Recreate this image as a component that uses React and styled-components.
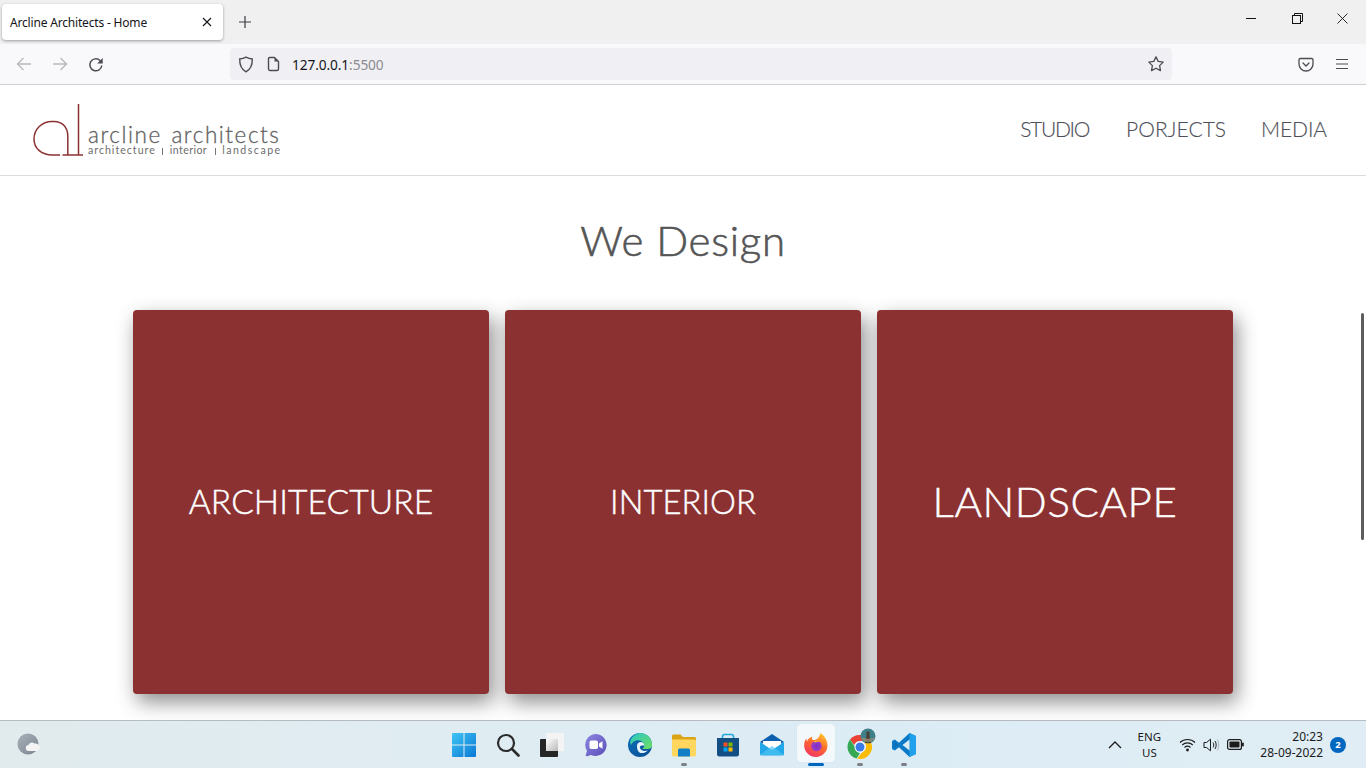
import React from "react";
import styled, { createGlobalStyle } from "styled-components";

const Global = createGlobalStyle`
  html, body { margin: 0; padding: 0; height: 100%; overflow: hidden; background: #fff; }
  * { box-sizing: border-box; }
`;

const Screen = styled.div`
  width: 1366px; height: 768px; display: flex; flex-direction: column; overflow: hidden; position: relative;
  font-family: "Open Sans", "Noto Sans", sans-serif;
`;

/* ---------- browser chrome ---------- */
const TabStrip = styled.div`
  height: 44px; background: #f0f0f1; display: flex; align-items: flex-start; padding: 4px 0 0 2px; flex: none;
`;
const Tab = styled.div`
  width: 221px; height: 36px; background: #fff; border-radius: 4px; box-shadow: 0 1px 3px rgba(0,0,0,.35);
  display: flex; align-items: center; justify-content: space-between; padding: 0 11px 0 8px;
  font-size: 12px; color: #15141a; font-family: "Noto Sans", sans-serif; letter-spacing: -.18px;
`;
const NewTab = styled.div`
  width: 44px; height: 36px; display: flex; align-items: center; justify-content: center;
`;
const Spacer = styled.div`flex: 1;`;
const WinButtons = styled.div`
  display: flex; height: 36px; margin-top: -4px; align-items: center;
`;
const WinBtn = styled.div`
  width: 46px; height: 44px; display: flex; align-items: center; justify-content: center;
`;
const Toolbar = styled.div`
  height: 41px; background: #f9f9fb; border-bottom: 1px solid #cfcfd2; flex: none; display: flex; align-items: center;
  padding: 0 0 0 6px;
`;
const NavBtn = styled.div`
  width: 36px; height: 32px; display: flex; align-items: center; justify-content: center;
`;
const UrlBar = styled.div`
  width: 942px; height: 32px; margin-left: 116px; background: #f0f0f4; border-radius: 4px; display: flex; align-items: center;
  padding: 0 5px 0 5px;
`;
const UrlIcon = styled.div`
  width: 22px; height: 20px; display: flex; align-items: center; justify-content: center; margin-right: ${p => p.$mr || 0}px;
`;
const UrlText = styled.div`
  font-size: 13.7px; color: #15141a; font-family: "Noto Sans", sans-serif; flex: 1; letter-spacing: -.1px;
  span { color: #8a8a91; }
`;
const RightTools = styled.div`
  display: flex; margin-left: 116px;
`;

/* ---------- site ---------- */
const Page = styled.div`
  flex: 1; min-height: 0; background: #fff; overflow: hidden; position: relative;
`;
const SiteHeader = styled.header`
  height: 91px; border-bottom: 1px solid #dcdcdc; display: flex; align-items: center; justify-content: space-between;
  padding: 0 39px 0 33px;
`;
const Logo = styled.div`
  display: flex; align-items: flex-end; height: 54px;
`;
const LogoText = styled.div`
  margin-left: 3px; margin-bottom: 1px; color: #626262; font-family: "Lato", sans-serif; display: flex; flex-direction: column;
`;
const LogoName = styled.div`
  font-size: 22.5px; line-height: 18px; height: 18px; letter-spacing: 1.55px; font-weight: 300; white-space: nowrap; word-spacing: 2px;
  -webkit-text-stroke: .3px #626262; position: relative; top: -1px;
`;
const LogoTag = styled.div`
  font-size: 10.6px; line-height: 11px; height: 11px; white-space: nowrap; display: flex; color: #6d6d6d;
`;
const TagWord = styled.span`
  letter-spacing: ${p => p.$ls}px;
`;
const TagSep = styled.span`
  width: 1px; height: 7px; background: #777; align-self: flex-end; margin: 0 ${p => p.$r}px 1px ${p => p.$l}px;
`;
const Nav = styled.nav`
  display: flex;
`;
const NavLink = styled.a`
  font-family: "Lato", sans-serif; font-weight: 300; font-size: 21px; color: #4f4f59; line-height: 28px; position: relative; top: -1px;
  letter-spacing: ${p => p.$ls}px; margin-left: ${p => p.$ml}px; -webkit-text-stroke: .15px #4f4f59;
`;
const Title = styled.h1`
  margin: 0; padding-top: 37px; height: 134px; text-align: center; font-family: "Lato", sans-serif; font-weight: 300;
  font-size: 42px; line-height: 54px; color: #555; letter-spacing: .7px; -webkit-text-stroke: .6px #555;
`;
const Cards = styled.div`
  display: grid; grid-template-columns: repeat(3, 356px); gap: 16px; justify-content: center;
`;
const Card = styled.div`
  height: 384px; background: #8c3132; border-radius: 4px; box-shadow: 4px 8px 20px rgba(0,0,0,.45);
  display: flex; align-items: center; justify-content: center; padding-bottom: 2px; color: #fff; font-family: "Lato", sans-serif; font-weight: 300;
  font-size: ${p => p.$size}px; letter-spacing: ${p => p.$ls}px; -webkit-text-stroke: .45px #fff;
`;
const ScrollThumb = styled.div`
  position: absolute; right: 2px; top: 228px; width: 3px; height: 227px; background: #5d5d5d; border-radius: 2px;
`;

/* ---------- taskbar ---------- */
const Taskbar = styled.div`
  height: 48px; flex: none; border-top: 1px solid #b6bcc0; display: grid; grid-template-columns: 1fr auto 1fr; align-items: center;
  background: linear-gradient(90deg, #e1ebee 0%, #dfecf2 35%, #dcecf5 65%, #e0edf4 100%);
`;
const TaskLeft = styled.div`
  padding-left: 17px; display: flex; align-items: center; padding-bottom: 1px;
`;
const TaskCenter = styled.div`
  display: flex; align-items: center; margin-left: 1px;
`;
const TaskIcon = styled.div`
  width: 44px; height: 44px; display: flex; align-items: center; justify-content: center; position: relative;
  > svg { position: relative; z-index: 1; }
  &::before {
    content: ""; display: ${p => p.$active ? "block" : "none"}; position: absolute; left: 3px; top: 1px; width: 38px; height: 38px;
    border-radius: 4px; background: rgba(255,255,255,.65); box-shadow: 0 0 1px rgba(0,0,0,.15);
  }
  &::after {
    content: ""; display: ${p => p.$dot || p.$active ? "block" : "none"}; position: absolute; bottom: 1px; left: 50%; transform: translateX(-50%);
    width: ${p => p.$active ? 16 : 6}px; height: 3px; border-radius: 2px; background: ${p => p.$active ? "#0067c0" : "#7b8085"};
  }
`;
const Tray = styled.div`
  display: flex; align-items: center; justify-content: flex-end; color: #1b1b1b; font-size: 12px; font-family: "Noto Sans", sans-serif;
`;
const Lang = styled.div`
  width: 30px; text-align: center; line-height: 16px; margin: 0 15px 0 12px; font-size: 11.5px;
`;
const TrayIcons = styled.div`
  display: flex; align-items: center; gap: 7px; margin-right: 16px;
`;
const Clock = styled.div`
  text-align: right; line-height: 16px; margin-right: 7px;
`;
const Badge = styled.div`
  width: 16px; height: 16px; border-radius: 50%; background: #0067c0; color: #fff; font-size: 9.5px; font-weight: 700;
  display: flex; align-items: center; justify-content: center; margin-right: 20px;
`;

const Stroke = { fill: "none", stroke: "currentColor" };

const Shield = () => (
  <svg width="16" height="17" viewBox="0 0 16 17" style={{ color: "#4c4c52" }}><path {...Stroke} strokeWidth="1.4" d="M8 1.2c2 1.2 4 1.7 6.3 1.8.1 5.8-1.6 10.3-6.3 12.8C3.300 13.300 1.600 8.800 1.700 3 4 2.900 6 2.400 8 1.200z"/></svg>
);
const PageIcon = () => (
  <svg width="14" height="16" viewBox="0 0 14 16" style={{ color: "#4c4c52" }}><path {...Stroke} strokeWidth="1.4" strokeLinejoin="round" d="M2.500 1.500h5l4 4v7.500a1.500 1.500 0 0 1-1.500 1.500H3a1.500 1.500 0 0 1-1.500-1.500V2.500a1 1 0 0 1 1-1z"/><path fill="#4c4c52" d="M7.500 1.500l4 4h-4z"/></svg>
);
const Arrow = ({ flip }) => (
  <svg width="16" height="14" viewBox="0 0 16 14" style={{ color: "#b9b9bd", transform: flip ? "scaleX(-1)" : "none" }}><path {...Stroke} strokeWidth="1.3" d="M15 7H1.500M7.500 1 1.500 7l6 6"/></svg>
);
const Reload = () => (
  <svg width="16" height="18" viewBox="0 0 16 18" style={{ color: "#4c4c52" }}><g transform="translate(0 2)"><path {...Stroke} strokeWidth="1.5" d="M13.800 8.500A6 6 0 1 1 12 3.500L14 5.500"/><path fill="#4c4c52" d="M14.700 1v5.500H9.200z"/></g></svg>
);
const Star = () => (
  <svg width="18" height="18" viewBox="0 0 18 18" style={{ color: "#4c4c52" }}><path {...Stroke} strokeWidth="1.300" strokeLinejoin="round" d="M9 1.800l2.200 4.600 5 .7-3.600 3.500.9 5L9 13.200l-4.500 2.400.9-5L1.800 7.100l5-.7z"/></svg>
);
const Pocket = () => (
  <svg width="16" height="15" viewBox="0 0 16 15" style={{ color: "#4c4c52" }}><path {...Stroke} strokeWidth="1.300" d="M2.200 1.500h11.600a1.200 1.200 0 0 1 1.200 1.200V7a7 7 0 0 1-14 0V2.700a1.200 1.200 0 0 1 1.200-1.200z"/><path {...Stroke} strokeWidth="1.300" strokeLinecap="round" d="M5 6l3 3 3-3"/></svg>
);
const Menu = () => (
  <svg width="14" height="12" viewBox="0 0 14 12" style={{ color: "#4c4c52" }}><path {...Stroke} strokeWidth="1.200" d="M1 1.500h12M1 6h12M1 10.500h12"/></svg>
);

const LogoMark = () => (
  <svg width="52" height="54" viewBox="0 0 52 54">
    <path fill="none" stroke="#8c3132" strokeWidth="1.500" d="M27 52H19.500C8 52 1 45 1 36 1 26 9 18.500 19 18.500H21C30 18.500 34.800 25 34.800 33V52" />
    <path fill="none" stroke="#8c3132" strokeWidth="1.500" d="M45.500 1V52M29.500 52H50" />
  </svg>
);

const WinLogo = () => (
  <svg width="24" height="24" viewBox="0 0 24 24">
    <defs><linearGradient id="wl" x1="0" y1="0" x2="1" y2="1"><stop offset="0" stopColor="#3ec4f5"/><stop offset="1" stopColor="#0a78d4"/></linearGradient></defs>
    <path fill="url(#wl)" d="M0 1a1 1 0 0 1 1-1h10.500v11.500H0zM12.500 0H23a1 1 0 0 1 1 1v10.500H12.500zM0 12.500h11.500V24H1a1 1 0 0 1-1-1zM12.500 12.500H24V23a1 1 0 0 1-1 1H12.500z"/>
  </svg>
);
const SearchIcon = () => (
  <svg width="24" height="24" viewBox="0 0 24 24"><circle cx="10" cy="10" r="8" fill="none" stroke="#2a2a2a" strokeWidth="2.200"/><path stroke="#2a2a2a" strokeWidth="2.600" strokeLinecap="round" d="M16 16l6.500 6.500"/></svg>
);
const TaskView = () => (
  <svg width="24" height="24" viewBox="0 0 24 24">
    <defs><linearGradient id="tv" x1="0" y1="0" x2="1" y2="1"><stop offset="0" stopColor="#ffffff"/><stop offset="1" stopColor="#b8b8b8"/></linearGradient></defs>
    <rect x="0" y="6" width="18" height="18" rx="1" fill="#262626"/>
    <rect x="6" y="0" width="18" height="18" rx="1" fill="#f4f4f4"/>
    <rect x="6" y="6" width="12" height="12" fill="url(#tv)"/>
  </svg>
);
const Chat = () => (
  <svg width="24" height="24" viewBox="0 0 24 24">
    <defs><linearGradient id="ch" x1="0" y1="0" x2="1" y2="1"><stop offset="0" stopColor="#8d86e0"/><stop offset="1" stopColor="#5a4fb8"/></linearGradient></defs>
    <path fill="url(#ch)" d="M11.500 1a11 11 0 1 1-4.500 21l-3.600 1.300c-1 .3-1.900-.6-1.600-1.500L3 18A11 11 0 0 1 11.500 1z"/>
    <rect x="5.500" y="7.500" width="8.500" height="8.500" rx="1.800" fill="#fff"/><path fill="#fff" d="M15 10.500l3.500-2.200v7.400L15 13.500z"/>
  </svg>
);
const Edge = () => (
  <svg width="24" height="24" viewBox="0 0 24 24">
    <defs>
      <linearGradient id="e1" x1="0" y1="0" x2="1" y2="1"><stop offset="0" stopColor="#0b6fb8"/><stop offset="1" stopColor="#0a4e94"/></linearGradient>
      <linearGradient id="e2" x1="0" y1="0" x2="1" y2="1"><stop offset="0" stopColor="#2bc5c8"/><stop offset="1" stopColor="#6ee05f"/></linearGradient>
    </defs>
    <circle cx="12" cy="12" r="12" fill="url(#e1)"/>
    <path fill="url(#e2)" d="M3 6C6 1 11 0 12 0c7 0 12 5 12 12 0 2.500-1.500 4-4.500 4H14c2-1 2.500-3 2-4.500C15 8 11 6.500 8 7.500 5.500 8.300 4 10 3 12 2 10 2 8 3 6z"/>
    <path fill="#e8f4fb" d="M9 13c0-2.500 2-4 3.700-4 2 0 3.500 1.500 3.500 3.500H14c-1.500 0-2.500 1-2 2.500.8 2.500 4 3.500 7.500 2.500-2 2.500-6 3.300-8 2C9.500 18.300 9 15.500 9 13z"/>
  </svg>
);
const Folder = () => (
  <svg width="24" height="24" viewBox="0 0 24 24">
    <path fill="#d9a416" d="M0 3a1.500 1.500 0 0 1 1.500-1.500h7L11 4h11.500A1.500 1.500 0 0 1 24 5.500V9H0z"/>
    <path fill="#ffd75e" d="M0 6.500h22.500A1.500 1.500 0 0 1 24 8v14a1.500 1.500 0 0 1-1.500 1.500h-21A1.500 1.500 0 0 1 0 22z"/>
    <path fill="#0f7fc8" d="M6 17a1.500 1.500 0 0 1 1.500-1.500h9A1.500 1.500 0 0 1 18 17v6.500H6z"/>
  </svg>
);
const Store = () => (
  <svg width="24" height="24" viewBox="0 0 24 24">
    <path fill="none" stroke="#28a6dd" strokeWidth="1.600" d="M6.500 5V3.500a2 2 0 0 1 2-2h7a2 2 0 0 1 2 2V5"/>
    <path fill="#134e85" d="M1 5h22v16a2.500 2.500 0 0 1-2.500 2.500h-17A2.500 2.500 0 0 1 1 21z"/>
    <rect x="7.500" y="9.500" width="4" height="4" fill="#f25022"/><rect x="12.500" y="9.500" width="4" height="4" fill="#7fba00"/>
    <rect x="7.500" y="14.500" width="4" height="4" fill="#00a4ef"/><rect x="12.500" y="14.500" width="4" height="4" fill="#ffb900"/>
  </svg>
);
const Mail = () => (
  <svg width="26" height="24" viewBox="0 0 26 24">
    <path fill="#0f5fb0" d="M13 1 25 9 13 16 1 9z"/>
    <path fill="#fff" d="M4 8h18v6l-9 5-9-5z"/>
    <path fill="#22a8e8" d="M1 9l12 8 12-8v12a1.500 1.500 0 0 1-1.500 1.500h-21A1.500 1.500 0 0 1 1 21z"/>
    <path fill="#4dc3f3" d="M1 22 13 13 25 22z" opacity=".7"/>
  </svg>
);
const Firefox = () => (
  <svg width="24" height="24" viewBox="0 0 24 24">
    <defs>
      <linearGradient id="ff" x1=".7" y1="0" x2=".2" y2="1"><stop offset="0" stopColor="#ffc22e"/><stop offset=".45" stopColor="#ff6a2b"/><stop offset="1" stopColor="#f0306a"/></linearGradient>
      <radialGradient id="fp"><stop offset="0" stopColor="#7a2fc5"/><stop offset="1" stopColor="#a03ec4"/></radialGradient>
    </defs>
    <path fill="url(#ff)" d="M16.500 0c4.500 3 7 7.500 7 12.500A11.800 11.800 0 0 1 12 24 11.800 11.800 0 0 1 .2 12C.2 9.500 1 7.500 2.200 5.500l.8 3c1-2.500 3-4.300 5.500-5C7.500 5 7.800 6 9 7c3 .2 6-1.500 7.500-7z"/>
    <circle cx="12.500" cy="13" r="5.300" fill="url(#fp)"/>
    <path fill="#ffb02e" d="M9.500 8.500c2-1.500 5-1 6.500.5-1.500-.3-3-.3-4 .3-1 .5-1.700.2-2.500-.8z"/>
  </svg>
);
const Chrome = () => (
  <svg width="44" height="34" viewBox="0 0 44 34" style={{ overflow: "visible" }}>
    <g transform="translate(10 7)">
      <path fill="#ea4335" d="M12 0a12 12 0 0 1 10.400 6H12a6 6 0 0 0-5.700 4L2 4.500A12 12 0 0 1 12 0z"/>
      <path fill="#34a853" d="M2 4.500 7 12a5.500 5.500 0 0 0 5 6l-3.500 5.500A12 12 0 0 1 2 4.500z"/>
      <path fill="#fbbc05" d="M22.400 6A12 12 0 0 1 9 23.600L14.500 17A6 6 0 0 0 16 7z"/>
      <circle cx="12" cy="12" r="5.500" fill="#fff"/><circle cx="12" cy="12" r="4.500" fill="#3b7be8"/>
    </g>
    <circle cx="30" cy="8" r="7.500" fill="#3f7f8a"/>
    <path fill="#4a4035" d="M28.500 3.500h3v4l1.500 7.500h-6l1.500-7.500z"/>
    <path fill="#a09478" d="M23 9.500c3 1.500 11 1.500 14 0a7.500 7.500 0 0 1-14 0z" opacity=".7"/>
  </svg>
);
const VSCode = () => (
  <svg width="24" height="24" viewBox="0 0 24 24">
    <path fill="#0a7ac8" d="M17.500 0 24 3v18l-6.500 3L7 14.200 2.800 17.500 0 16V8l2.800-1.500L7 9.800z"/>
    <path fill="#21a1ea" d="M17.500 0 24 3v18l-6.500 3z"/>
    <path fill="#dcecf5" d="M17.500 6.500 10.500 12l7 5.500z"/>
    <path fill="#0d6cb5" d="M2.800 9 6 12l-3.200 3z"/>
  </svg>
);
const Weather = () => (
  <svg width="23" height="23" viewBox="0 0 23 23">
    <defs><linearGradient id="w" x1="0" y1="0" x2="1" y2="1"><stop offset="0" stopColor="#a9b0b8"/><stop offset="1" stopColor="#7c8590"/></linearGradient></defs>
    <circle cx="11" cy="11" r="10.500" fill="url(#w)"/>
    <path fill="#f4f4f4" d="M12 18a3 3 0 0 1-.5-6c.6-2.500 4.500-3.500 6-1.500 2.300-.5 5 .6 5 3.500 0 2.500-2 4-4 4z"/>
  </svg>
);
const Chevron = () => (
  <svg width="14" height="9" viewBox="0 0 14 9"><path fill="none" stroke="#1b1b1b" strokeWidth="1.300" d="M1 8 7 2l6 6"/></svg>
);
const Wifi = () => (
  <svg width="17" height="14" viewBox="0 0 17 14"><g fill="none" stroke="#1b1b1b" strokeWidth="1.100"><path d="M1 4.500c4-4 11-4 15 0"/><path d="M3.200 7c3-2.800 7.600-2.800 10.600 0"/><path d="M5.500 9.500c1.700-1.500 4.300-1.500 6 0"/></g><circle cx="8.500" cy="12" r="1.400" fill="#1b1b1b"/></svg>
);
const Speaker = () => (
  <svg width="17" height="14" viewBox="0 0 17 14"><g fill="none" stroke="#1b1b1b" strokeWidth="1"><path d="M1 4.500h2.500L7.500 1.200v11.600L3.500 9.500H1z"/><path d="M10 4.500c1 1.500 1 3.500 0 5"/><path d="M12 3c1.600 2.400 1.600 5.600 0 8"/></g><path fill="none" stroke="#a8adb2" strokeWidth="1" d="M14.200 1.500c2 3.200 2 7.800 0 11"/></svg>
);
const Battery = () => (
  <svg width="17" height="11" viewBox="0 0 17 11"><rect x=".6" y=".6" width="13.800" height="9.800" rx="2" fill="none" stroke="#1b1b1b" strokeWidth="1.200"/><rect x="2.500" y="2.500" width="10" height="6" rx=".8" fill="#1b1b1b"/><rect x="15" y="3.500" width="1.800" height="4" rx=".8" fill="#1b1b1b"/></svg>
);

export default function App() {
  return (
    <Screen>
      <Global />
      <TabStrip>
        <Tab>
          Arcline Architects - Home
          <svg width="10" height="10" viewBox="0 0 10 10"><path stroke="#15141a" strokeWidth="1.100" d="M1 1l8 8M9 1 1 9"/></svg>
        </Tab>
        <NewTab>
          <svg width="12" height="12" viewBox="0 0 12 12"><path stroke="#3d3d42" strokeWidth="1.200" d="M6 0v12M0 6h12"/></svg>
        </NewTab>
        <Spacer />
        <WinButtons>
          <WinBtn><svg width="10" height="1" viewBox="0 0 10 1"><rect width="10" height="1" fill="#111"/></svg></WinBtn>
          <WinBtn><svg width="11" height="11" viewBox="0 0 11 11"><g fill="none" stroke="#111"><rect x=".5" y="2.500" width="8" height="8"/><path d="M2.500 2.500V.5h8v8h-2"/></g></svg></WinBtn>
          <WinBtn><svg width="13" height="11" viewBox="0 0 13 11"><path stroke="#111" strokeWidth=".9" d="M.5.500l10 10M10.500.500l-10 10"/></svg></WinBtn>
        </WinButtons>
      </TabStrip>
      <Toolbar>
        <NavBtn><Arrow /></NavBtn>
        <NavBtn><Arrow flip /></NavBtn>
        <NavBtn><Reload /></NavBtn>
        <UrlBar>
          <UrlIcon $mr={6}><Shield /></UrlIcon>
          <UrlIcon $mr={7}><PageIcon /></UrlIcon>
          <UrlText>127.0.0.1<span>:5500</span></UrlText>
          <UrlIcon><Star /></UrlIcon>
        </UrlBar>
        <RightTools>
          <NavBtn><Pocket /></NavBtn>
          <NavBtn><Menu /></NavBtn>
        </RightTools>
      </Toolbar>
      <Page>
        <SiteHeader>
          <Logo>
            <LogoMark />
            <LogoText>
              <LogoName>arcline architects</LogoName>
              <LogoTag>
                <TagWord $ls={1}>architecture</TagWord>
                <TagSep $l={6} $r={7} />
                <TagWord $ls={0.42}>interior</TagWord>
                <TagSep $l={8} $r={6} />
                <TagWord $ls={1.5}>landscape</TagWord>
              </LogoTag>
            </LogoText>
          </Logo>
          <Nav>
            <NavLink $ml={0} $ls={-1.3}>STUDIO</NavLink>
            <NavLink $ml={37} $ls={0.05}>PORJECTS</NavLink>
            <NavLink $ml={35} $ls={-0.1}>MEDIA</NavLink>
          </Nav>
        </SiteHeader>
        <Title>We Design</Title>
        <Cards>
          <Card $size={33.5} $ls={0.1}>ARCHITECTURE</Card>
          <Card $size={32.7} $ls={0.1}>INTERIOR</Card>
          <Card $size={42} $ls={0.6}>LANDSCAPE</Card>
        </Cards>
        <ScrollThumb />
      </Page>
      <Taskbar>
        <TaskLeft><Weather /></TaskLeft>
        <TaskCenter>
          <TaskIcon><WinLogo /></TaskIcon>
          <TaskIcon><SearchIcon /></TaskIcon>
          <TaskIcon><TaskView /></TaskIcon>
          <TaskIcon><Chat /></TaskIcon>
          <TaskIcon><Edge /></TaskIcon>
          <TaskIcon $dot><Folder /></TaskIcon>
          <TaskIcon><Store /></TaskIcon>
          <TaskIcon><Mail /></TaskIcon>
          <TaskIcon $active><Firefox /></TaskIcon>
          <TaskIcon $dot><Chrome /></TaskIcon>
          <TaskIcon $dot><VSCode /></TaskIcon>
        </TaskCenter>
        <Tray>
          <Chevron />
          <Lang>ENG<br />US</Lang>
          <TrayIcons><Wifi /><Speaker /><Battery /></TrayIcons>
          <Clock>20:23<br />28-09-2022</Clock>
          <Badge>2</Badge>
        </Tray>
      </Taskbar>
    </Screen>
  );
}
